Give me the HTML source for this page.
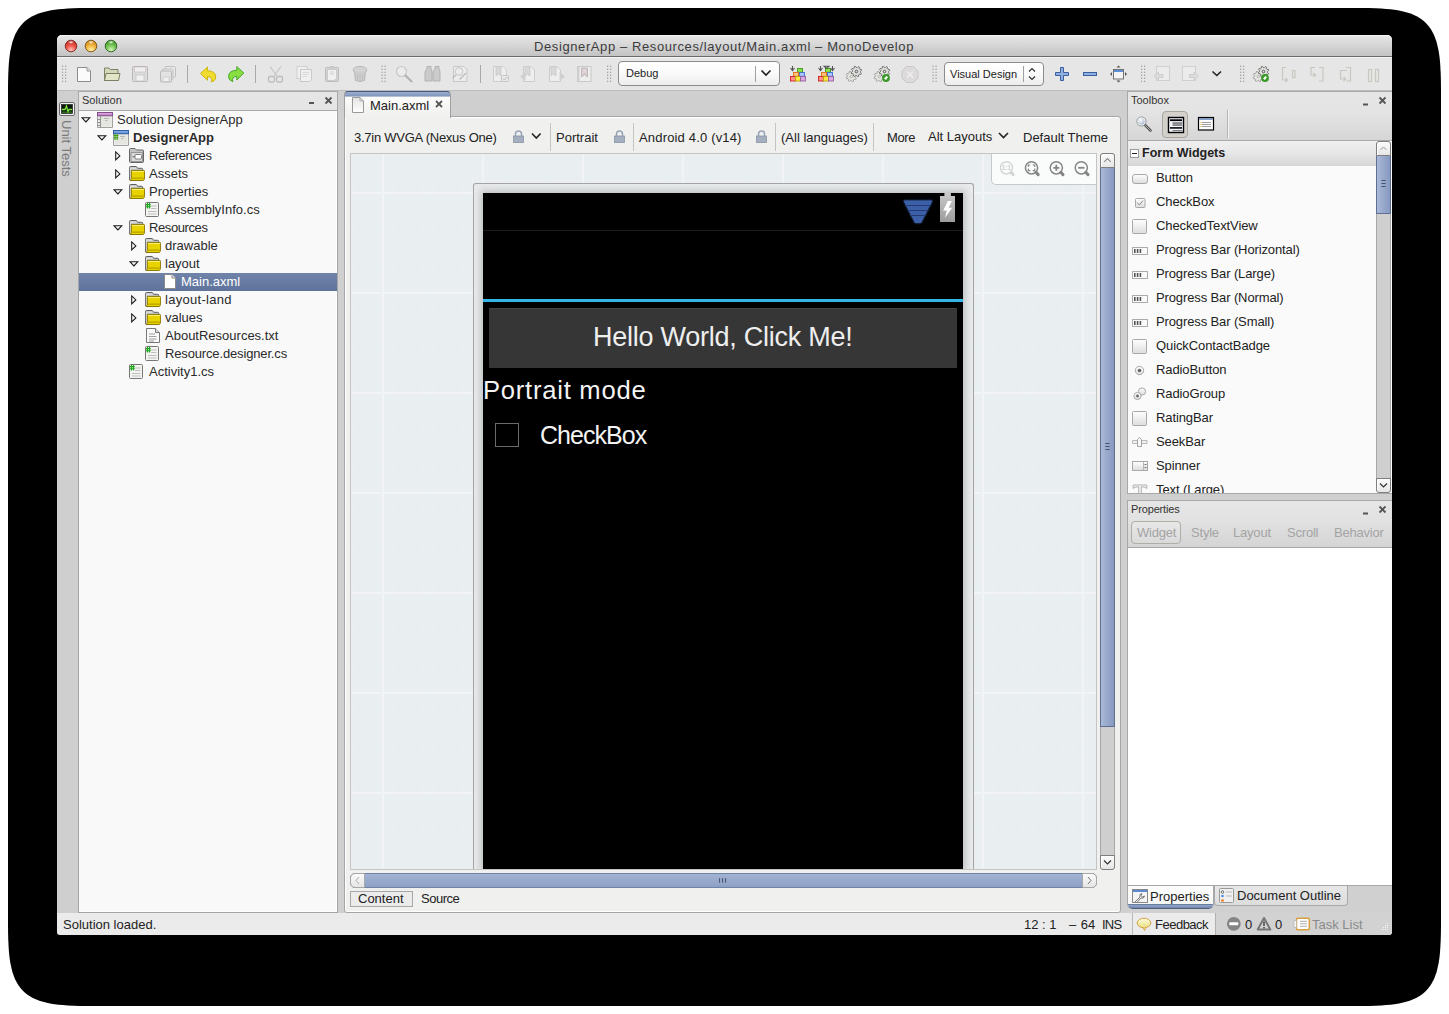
<!DOCTYPE html>
<html><head><meta charset="utf-8">
<style>
*{box-sizing:border-box;margin:0;padding:0}
html,body{width:1449px;height:1014px;overflow:hidden;background:#fff}
body{position:relative;font-family:"Liberation Sans",sans-serif;font-size:13px;color:#222}
.a{position:absolute}
svg{position:absolute;overflow:visible}
#shadow{left:8px;top:8px;width:1433px;height:998px;background:#000;border-radius:68px/58px}
#win{left:57px;top:35px;width:1335px;height:900px;background:#cfcfcf;border-radius:5px 5px 3px 3px;overflow:hidden}
#title{left:57px;top:35px;width:1335px;height:22px;background:linear-gradient(#ededed,#e4e4e4 10%,#c3c3c3);border-bottom:1px solid #6a6a6a;box-shadow:inset 0 1px 0 #f4f4f4;border-radius:5px 5px 0 0}
.tl{top:40px;width:12px;height:12px;border-radius:50%}
#toolbar{left:57px;top:57px;width:1335px;height:34px;background:#e6e6e6;border-top:1px solid #f5f5f5;border-bottom:1px solid #bdbdbd}
.t{position:absolute;white-space:nowrap;line-height:15px}
.r{position:absolute;white-space:nowrap;line-height:15px;font-size:13px;color:#2a2a2a}
</style></head><body>
<svg width="0" height="0" style="position:absolute">
<defs>
  <symbol id="exd" viewBox="0 0 10 6"><path d="M0.9 0.7 H8.9 L4.9 4.9 Z" fill="none" stroke="#1a1a1a" stroke-width="1.05" stroke-linejoin="miter"/></symbol>
  <symbol id="exr" viewBox="0 0 6 10"><path d="M0.7 0.9 V8.9 L4.9 4.9 Z" fill="none" stroke="#1a1a1a" stroke-width="1.05"/></symbol>
  <symbol id="folder" viewBox="0 0 16 15">
    <path d="M0.5 14 V1.5 Q0.5 0.5 1.5 0.5 H7.3 L8.8 2.3 H12.6 Q13.6 2.3 13.6 3.3 V5" fill="#c6c8cc" stroke="#505050" stroke-width="0.9"/>
    <path d="M1.3 14 V2.2 H7.3" fill="none" stroke="#e8e8e8" stroke-width="0.8"/>
    <path d="M2.3 4.4 H14.6 Q15.6 4.4 15.6 5.4 V12.8 L14.3 14.5 H0.8 Q2.3 13.8 2.3 12.5 Z" fill="#e8d200" stroke="#857400" stroke-width="0.95"/>
    <path d="M3 5.5 H14.8" stroke="#fff27a" stroke-width="0.9"/>
    <path d="M3 12.2 H14.8" stroke="#c4ae00" stroke-width="1.6"/>
  </symbol>
  <symbol id="reffolder" viewBox="0 0 16 15">
    <path d="M0.5 1.5 Q0.5 0.5 1.5 0.5 H6 L7.5 2 H13.5 Q14.5 2 14.5 3 V13.5 Q14.5 14.5 13.5 14.5 H1.5 Q0.5 14.5 0.5 13.5 Z" fill="#c4c4c4" stroke="#666" stroke-width="1"/>
    <path d="M2 4.5 H13.5 V13.5 H2 Z" fill="#dadada" stroke="#888" stroke-width="0.8"/>
    <rect x="6" y="6.5" width="6.5" height="4.5" rx="1" fill="#fff" stroke="#666" stroke-width="0.8"/>
    <path d="M3.5 8.7 H6" stroke="#666" stroke-width="1"/>
  </symbol>
  <symbol id="csfile" viewBox="0 0 14 15">
    <rect x="0.5" y="0.5" width="13" height="14" rx="1" fill="#f4f4f0" stroke="#777" stroke-width="1"/>
    <path d="M6 4 H11.5 M6 6.5 H11.5 M3 9.5 H11.5 M3 12 H11.5" stroke="#b8b8b8" stroke-width="0.9"/>
    <path d="M2.4 1 V6.5 M4.4 1 V6.5 M1 2.6 H5.8 M1 4.8 H5.8" stroke="#19a819" stroke-width="1.1"/>
  </symbol>
  <symbol id="doc" viewBox="0 0 12 15">
    <path d="M0.5 0.5 H8 L11.5 4 V14.5 H0.5 Z" fill="#fdfdfd" stroke="#8a8a8a" stroke-width="1"/>
    <path d="M8 0.5 V4 H11.5" fill="#e8e8e8" stroke="#8a8a8a" stroke-width="1"/>
  </symbol>
  <symbol id="txtdoc" viewBox="0 0 14 15">
    <path d="M0.5 0.5 H9.5 L13.5 4.5 V14.5 H0.5 Z" fill="#fafafa" stroke="#777" stroke-width="1"/>
    <path d="M9.5 0.5 V4.5 H13.5" fill="#ddd" stroke="#777" stroke-width="1"/>
    <path d="M3 6 H9 M3 8.5 H10.5 M3 11 H10.5 M3 13 H8" stroke="#777" stroke-width="0.7"/>
  </symbol>
  <symbol id="slnicon" viewBox="0 0 16 16">
    <rect x="0.5" y="0.5" width="15" height="15" rx="0.4" fill="#e6e6e0" stroke="#7a7a7a"/>
    <rect x="1" y="1" width="14" height="14" fill="none" stroke="#fafafa" stroke-width="0.6"/>
    <rect x="0.5" y="0.5" width="15" height="3.3" fill="#c07ac8" stroke="#7a4a80" stroke-width="0.9"/>
    <rect x="1" y="1.1" width="14" height="1.2" fill="#e0a8e4"/>
    <path d="M3.5 3.8 V15.5 M0.5 7.5 H3.5 M0.5 10.5 H3.5 M0.5 13.5 H3.5" stroke="#8a8a8a" stroke-width="0.9"/>
    <path d="M7 6.5 H12 M8 8.5 H10.5" stroke="#a8a8a8" stroke-width="0.8"/>
  </symbol>
  <symbol id="projicon" viewBox="0 0 16 16">
    <rect x="0.5" y="0.5" width="15" height="15" rx="0.4" fill="#e6e6e0" stroke="#7a7a7a"/>
    <rect x="1" y="1" width="14" height="14" fill="none" stroke="#fafafa" stroke-width="0.6"/>
    <rect x="0.5" y="0.5" width="15" height="3.3" fill="#4a7ac8" stroke="#2a5aa0" stroke-width="0.9"/>
    <rect x="1.2" y="1.2" width="13.6" height="1.4" fill="#8ab4ea"/>
    <path d="M2 4.2 V10 M4.2 4.2 V10 M0.8 5.5 H5.4 M0.8 7.8 H5.4" stroke="#3aa010" stroke-width="1.1"/>
    <path d="M7 6.5 H12 M8 8.5 H10.5" stroke="#a8a8a8" stroke-width="0.8"/>
  </symbol>
</defs>
</svg>
<svg style="left:0;top:0" width="1449" height="1014"><path d="M1333.0 8.0 L1359.4 8.0 L1368.7 8.1 L1375.6 8.3 L1381.2 8.6 L1386.1 8.9 L1390.4 9.3 L1394.3 9.8 L1397.8 10.3 L1401.1 11.0 L1404.1 11.7 L1407.0 12.4 L1409.6 13.3 L1412.1 14.2 L1414.4 15.2 L1416.6 16.3 L1418.7 17.5 L1420.7 18.8 L1422.5 20.1 L1424.3 21.6 L1425.9 23.1 L1427.4 24.7 L1428.9 26.5 L1430.2 28.3 L1431.5 30.3 L1432.7 32.4 L1433.8 34.6 L1434.8 36.9 L1435.7 39.4 L1436.6 42.0 L1437.3 44.9 L1438.0 47.9 L1438.7 51.2 L1439.2 54.7 L1439.7 58.6 L1440.1 62.9 L1440.4 67.8 L1440.7 73.4 L1440.9 80.3 L1441.0 89.6 L1441.0 116.0 L1441.0 898.0 L1441.0 924.4 L1440.9 933.7 L1440.7 940.6 L1440.4 946.2 L1440.1 951.1 L1439.7 955.4 L1439.2 959.3 L1438.7 962.8 L1438.0 966.1 L1437.3 969.1 L1436.6 972.0 L1435.7 974.6 L1434.8 977.1 L1433.8 979.4 L1432.7 981.6 L1431.5 983.7 L1430.2 985.7 L1428.9 987.5 L1427.4 989.3 L1425.9 990.9 L1424.3 992.4 L1422.5 993.9 L1420.7 995.2 L1418.7 996.5 L1416.6 997.7 L1414.4 998.8 L1412.1 999.8 L1409.6 1000.7 L1407.0 1001.6 L1404.1 1002.3 L1401.1 1003.0 L1397.8 1003.7 L1394.3 1004.2 L1390.4 1004.7 L1386.1 1005.1 L1381.2 1005.4 L1375.6 1005.7 L1368.7 1005.9 L1359.4 1006.0 L1333.0 1006.0 L116.0 1006.0 L89.6 1006.0 L80.3 1005.9 L73.4 1005.7 L67.8 1005.4 L62.9 1005.1 L58.6 1004.7 L54.7 1004.2 L51.2 1003.7 L47.9 1003.0 L44.9 1002.3 L42.0 1001.6 L39.4 1000.7 L36.9 999.8 L34.6 998.8 L32.4 997.7 L30.3 996.5 L28.3 995.2 L26.5 993.9 L24.7 992.4 L23.1 990.9 L21.6 989.3 L20.1 987.5 L18.8 985.7 L17.5 983.7 L16.3 981.6 L15.2 979.4 L14.2 977.1 L13.3 974.6 L12.4 972.0 L11.7 969.1 L11.0 966.1 L10.3 962.8 L9.8 959.3 L9.3 955.4 L8.9 951.1 L8.6 946.2 L8.3 940.6 L8.1 933.7 L8.0 924.4 L8.0 898.0 L8.0 116.0 L8.0 89.6 L8.1 80.3 L8.3 73.4 L8.6 67.8 L8.9 62.9 L9.3 58.6 L9.8 54.7 L10.3 51.2 L11.0 47.9 L11.7 44.9 L12.4 42.0 L13.3 39.4 L14.2 36.9 L15.2 34.6 L16.3 32.4 L17.5 30.3 L18.8 28.3 L20.1 26.5 L21.6 24.7 L23.1 23.1 L24.7 21.6 L26.5 20.1 L28.3 18.8 L30.3 17.5 L32.4 16.3 L34.6 15.2 L36.9 14.2 L39.4 13.3 L42.0 12.4 L44.9 11.7 L47.9 11.0 L51.2 10.3 L54.7 9.8 L58.6 9.3 L62.9 8.9 L67.8 8.6 L73.4 8.3 L80.3 8.1 L89.6 8.0 L116.0 8.0 Z" fill="#000"/></svg>
<div id="win" class="a"></div>
<div id="title" class="a"></div>
<svg style="left:0;top:0" width="1449" height="1014"><defs><radialGradient id="hl"><stop offset="0" stop-color="#fff" stop-opacity=".95"/><stop offset="1" stop-color="#fff" stop-opacity="0.1"/></radialGradient></defs><radialGradient id="tlr" cx="0.5" cy="0.85" r="0.75"><stop offset="0" stop-color="#ffc4bc"/><stop offset="0.55" stop-color="#f0564a"/><stop offset="1" stop-color="#c03228"/></radialGradient>
<circle cx="71" cy="46" r="5.8" fill="url(#tlr)" stroke="#7a2a22" stroke-width="0.9"/>
<ellipse cx="71" cy="42.3" rx="2.8" ry="1.5" fill="url(#hl)"/><radialGradient id="tlo" cx="0.5" cy="0.85" r="0.75"><stop offset="0" stop-color="#fff2a8"/><stop offset="0.55" stop-color="#f2b844"/><stop offset="1" stop-color="#d08820"/></radialGradient>
<circle cx="91" cy="46" r="5.8" fill="url(#tlo)" stroke="#7a5210" stroke-width="0.9"/>
<ellipse cx="91" cy="42.3" rx="2.8" ry="1.5" fill="url(#hl)"/><radialGradient id="tlg" cx="0.5" cy="0.85" r="0.75"><stop offset="0" stop-color="#d8f6bc"/><stop offset="0.55" stop-color="#78c858"/><stop offset="1" stop-color="#48982e"/></radialGradient>
<circle cx="111" cy="46" r="5.8" fill="url(#tlg)" stroke="#2e6420" stroke-width="0.9"/>
<ellipse cx="111" cy="42.3" rx="2.8" ry="1.5" fill="url(#hl)"/></svg>
<div class="t" style="left:534px;top:39px;font-size:13px;color:#3c3c3c;letter-spacing:0.6px">DesignerApp – Resources/layout/Main.axml – MonoDevelop</div>
<div id="toolbar" class="a"></div>
<!-- TOOLBAR ICONS -->
<svg style="left:0;top:0" width="1449" height="1014">
<g id="grips" fill="#9a9a9a"><rect x="62.0" y="65.7" width="1.2" height="1.2"/><rect x="62.0" y="68.7" width="1.2" height="1.2"/><rect x="62.0" y="71.7" width="1.2" height="1.2"/><rect x="62.0" y="74.7" width="1.2" height="1.2"/><rect x="62.0" y="77.7" width="1.2" height="1.2"/><rect x="62.0" y="80.7" width="1.2" height="1.2"/><rect x="65.0" y="65.7" width="1.2" height="1.2"/><rect x="65.0" y="68.7" width="1.2" height="1.2"/><rect x="65.0" y="71.7" width="1.2" height="1.2"/><rect x="65.0" y="74.7" width="1.2" height="1.2"/><rect x="65.0" y="77.7" width="1.2" height="1.2"/><rect x="65.0" y="80.7" width="1.2" height="1.2"/><rect x="381.5" y="65.7" width="1.2" height="1.2"/><rect x="381.5" y="68.7" width="1.2" height="1.2"/><rect x="381.5" y="71.7" width="1.2" height="1.2"/><rect x="381.5" y="74.7" width="1.2" height="1.2"/><rect x="381.5" y="77.7" width="1.2" height="1.2"/><rect x="381.5" y="80.7" width="1.2" height="1.2"/><rect x="384.5" y="65.7" width="1.2" height="1.2"/><rect x="384.5" y="68.7" width="1.2" height="1.2"/><rect x="384.5" y="71.7" width="1.2" height="1.2"/><rect x="384.5" y="74.7" width="1.2" height="1.2"/><rect x="384.5" y="77.7" width="1.2" height="1.2"/><rect x="384.5" y="80.7" width="1.2" height="1.2"/><rect x="607.0" y="65.7" width="1.2" height="1.2"/><rect x="607.0" y="68.7" width="1.2" height="1.2"/><rect x="607.0" y="71.7" width="1.2" height="1.2"/><rect x="607.0" y="74.7" width="1.2" height="1.2"/><rect x="607.0" y="77.7" width="1.2" height="1.2"/><rect x="607.0" y="80.7" width="1.2" height="1.2"/><rect x="610.0" y="65.7" width="1.2" height="1.2"/><rect x="610.0" y="68.7" width="1.2" height="1.2"/><rect x="610.0" y="71.7" width="1.2" height="1.2"/><rect x="610.0" y="74.7" width="1.2" height="1.2"/><rect x="610.0" y="77.7" width="1.2" height="1.2"/><rect x="610.0" y="80.7" width="1.2" height="1.2"/><rect x="932.5" y="65.7" width="1.2" height="1.2"/><rect x="932.5" y="68.7" width="1.2" height="1.2"/><rect x="932.5" y="71.7" width="1.2" height="1.2"/><rect x="932.5" y="74.7" width="1.2" height="1.2"/><rect x="932.5" y="77.7" width="1.2" height="1.2"/><rect x="932.5" y="80.7" width="1.2" height="1.2"/><rect x="935.5" y="65.7" width="1.2" height="1.2"/><rect x="935.5" y="68.7" width="1.2" height="1.2"/><rect x="935.5" y="71.7" width="1.2" height="1.2"/><rect x="935.5" y="74.7" width="1.2" height="1.2"/><rect x="935.5" y="77.7" width="1.2" height="1.2"/><rect x="935.5" y="80.7" width="1.2" height="1.2"/><rect x="1141.0" y="65.7" width="1.2" height="1.2"/><rect x="1141.0" y="68.7" width="1.2" height="1.2"/><rect x="1141.0" y="71.7" width="1.2" height="1.2"/><rect x="1141.0" y="74.7" width="1.2" height="1.2"/><rect x="1141.0" y="77.7" width="1.2" height="1.2"/><rect x="1141.0" y="80.7" width="1.2" height="1.2"/><rect x="1144.0" y="65.7" width="1.2" height="1.2"/><rect x="1144.0" y="68.7" width="1.2" height="1.2"/><rect x="1144.0" y="71.7" width="1.2" height="1.2"/><rect x="1144.0" y="74.7" width="1.2" height="1.2"/><rect x="1144.0" y="77.7" width="1.2" height="1.2"/><rect x="1144.0" y="80.7" width="1.2" height="1.2"/><rect x="1240.0" y="65.7" width="1.2" height="1.2"/><rect x="1240.0" y="68.7" width="1.2" height="1.2"/><rect x="1240.0" y="71.7" width="1.2" height="1.2"/><rect x="1240.0" y="74.7" width="1.2" height="1.2"/><rect x="1240.0" y="77.7" width="1.2" height="1.2"/><rect x="1240.0" y="80.7" width="1.2" height="1.2"/><rect x="1243.0" y="65.7" width="1.2" height="1.2"/><rect x="1243.0" y="68.7" width="1.2" height="1.2"/><rect x="1243.0" y="71.7" width="1.2" height="1.2"/><rect x="1243.0" y="74.7" width="1.2" height="1.2"/><rect x="1243.0" y="77.7" width="1.2" height="1.2"/><rect x="1243.0" y="80.7" width="1.2" height="1.2"/></g>
<!-- new doc -->
<path d="M77.5 67.5 H87 L90.5 71 V81.5 H77.5 Z" fill="#fbfbfb" stroke="#8c8c8c" stroke-width="1"/>
<path d="M87 67.5 V71 H90.5" fill="#e0e0e0" stroke="#8c8c8c" stroke-width="0.8"/>
<!-- open folder -->
<path d="M104.5 68 H109 L110.5 69.5 H118 V80.5 H104.5 Z" fill="#d4d8b8" stroke="#7c8064" stroke-width="1"/>
<path d="M106 73.5 H120 L118.5 80.5 H104.5 Z" fill="#e2e6c6" stroke="#7c8064" stroke-width="1"/>
<!-- save -->
<rect x="132.5" y="66.5" width="15" height="15" rx="1" fill="#dcdcdc" stroke="#b8b8b8"/>
<rect x="134.5" y="67" width="11" height="5" fill="#efefef" stroke="#c8b8b8" stroke-width="0.6"/>
<rect x="136" y="75" width="8" height="6" fill="#f0f0f0" stroke="#bdbdbd" stroke-width="0.6"/>
<!-- save all -->
<rect x="165" y="66.5" width="10.5" height="10.5" rx="1" fill="#e8e8e8" stroke="#c0c0c0"/>
<rect x="162.5" y="69" width="10.5" height="10.5" rx="1" fill="#e8e8e8" stroke="#c0c0c0"/>
<rect x="160.5" y="71" width="11" height="11" rx="1" fill="#e2e2e2" stroke="#b8b8b8"/>
<rect x="163" y="77" width="6" height="4.5" fill="#f0f0f0" stroke="#bdbdbd" stroke-width="0.6"/>
<!-- separators -->
<rect x="187" y="65" width="1" height="18" fill="#a8a8a8"/>
<rect x="255" y="65" width="1" height="18" fill="#a8a8a8"/>
<rect x="480" y="65" width="1" height="18" fill="#a8a8a8"/>
<!-- undo -->
<path d="M200.5 73.5 L207.5 67 V70.8 Q215.5 70.8 215.8 77 Q216 80.5 211.5 82 Q213 77 207.5 76.5 V80.3 Z" fill="#f0dc30" stroke="#c8b000" stroke-width="0.9" stroke-linejoin="round"/>
<!-- redo -->
<path d="M243.8 73 L236.8 66.5 V70.3 Q228.8 70.3 228.5 76.5 Q228.3 80 232.8 81.8 Q231.3 76.8 236.8 76.3 V80 Z" fill="#88dd40" stroke="#3ca020" stroke-width="0.9" stroke-linejoin="round"/>
<!-- cut -->
<path d="M270 66.5 L277 76 M281 66.5 L274 76" stroke="#c4c4c4" stroke-width="1.2"/>
<rect x="268.5" y="76.5" width="6" height="5.5" rx="1.5" fill="none" stroke="#bdbdbd" stroke-width="1.3"/>
<rect x="276.5" y="76.5" width="6" height="5.5" rx="1.5" fill="none" stroke="#bdbdbd" stroke-width="1.3"/>
<!-- copy -->
<rect x="297" y="66.5" width="10" height="12" fill="#efefef" stroke="#d0d0d0"/>
<path d="M300.5 69.5 H311.5 V79.5 L309.5 81.5 H300.5 Z" fill="#f0f0f0" stroke="#c8c8c8"/>
<path d="M302.5 72.5 H309 M302.5 74.5 H309 M302.5 76.5 H307" stroke="#d0d0d0" stroke-width="0.7"/>
<!-- paste -->
<rect x="325.5" y="67.5" width="13" height="14" rx="1" fill="#d4d4d4" stroke="#bcbcbc"/>
<path d="M327.5 69.5 H336.5 V78.5 L334 80.5 H327.5 Z" fill="#f0f0f0" stroke="#c4c4c4" stroke-width="0.8"/>
<rect x="329.5" y="66" width="5" height="2.5" rx="1" fill="#c8c8c8"/>
<path d="M330 72 H334 M330 74 H334" stroke="#c8c8c8" stroke-width="0.8"/>
<!-- trash -->
<ellipse cx="360" cy="70" rx="6.8" ry="3.6" fill="#d2d2d2" stroke="#b8b8b8"/>
<path d="M354.5 71.5 L355.5 80.5 Q360 82.5 364.5 80.5 L365.5 71.5" fill="#cdcdcd" stroke="#b8b8b8"/>
<path d="M357.5 74 V80 M360 74 V81 M362.5 74 V80" stroke="#bdbdbd" stroke-width="0.8"/>
<!-- find -->
<circle cx="401.5" cy="71.5" r="5" fill="#ececec" stroke="#c8c8c8" stroke-width="1.2"/>
<path d="M405.5 75.5 L411.5 81.5" stroke="#b4b4b4" stroke-width="2.2" stroke-linecap="round"/>
<!-- binoculars -->
<path d="M425 73 Q425 70 427 69 V66.5 H431 V69 Q432 70.5 432 73 V81 H425 Z" fill="#cbcbcb" stroke="#b2b2b2"/>
<path d="M433 73 Q433 70 435 69 V66.5 H439 V69 Q440 70.5 440 73 V81 H433 Z" fill="#cbcbcb" stroke="#b2b2b2"/>
<!-- find replace -->
<path d="M453.5 66.5 H464 L467 69.5 V81.5 H453.5 Z" fill="#ececec" stroke="#c8c8c8"/>
<circle cx="459" cy="71.5" r="3.8" fill="none" stroke="#c4c4c4" stroke-width="1"/>
<path d="M456 75 L452.5 78 M466 73 L459.5 79.5" stroke="#bcbcbc" stroke-width="1.3"/>
<!-- bookmark icons -->
<path d="M493.5 66.5 H503 L506.5 70 V81.5 H493.5 Z" fill="#eeeeee" stroke="#cccccc"/>
<path d="M496 67 V76 L498.5 74 L501 76 V67" fill="#d8d8d8" stroke="#c4c4c4" stroke-width="0.7"/>
<rect x="501.5" y="75.5" width="7" height="6" rx="1" fill="#e8e8e8" stroke="#c4c4c4"/>
<path d="M503 78.5 L504.5 80 L507 77" fill="none" stroke="#b8b8b8" stroke-width="0.9"/>

<path d="M523.5 66.5 H531 L534.5 70 V81.5 H523.5 Z" fill="#eeeeee" stroke="#cccccc"/>
<path d="M525 67 V76 L527.5 74 L530 76 V67" fill="#d8d8d8" stroke="#c4c4c4" stroke-width="0.7"/>
<path d="M520 76.5 L525.5 72 V81 Z" fill="#cfcfcf"/>

<path d="M549.5 66.5 H557 L560.5 70 V81.5 H549.5 Z" fill="#eeeeee" stroke="#cccccc"/>
<path d="M551 67 V76 L553.5 74 L556 76 V67" fill="#d8d8d8" stroke="#c4c4c4" stroke-width="0.7"/>
<path d="M565 76.5 L559.5 72 V81 Z" fill="#cfcfcf"/>

<rect x="577.5" y="66.5" width="13.5" height="15" fill="#eeeeee" stroke="#c8c8c8"/>
<rect x="577.5" y="66.5" width="2" height="15" fill="#d0d0d0"/>
<path d="M581.5 68 V77 L584.5 74.5 L587.5 77 V68 Z" fill="#d6cccc" stroke="#b8a8a8" stroke-width="0.7"/>
<path d="M582.5 69 L586.5 73 M586.5 69 L582.5 73" stroke="#f0f0f0" stroke-width="0.6"/>

<!-- Debug combo -->
<!-- build -->
<g>
<rect x="797.5" y="68.5" width="5" height="3.8" fill="#8ee048" stroke="#3a9a20" stroke-width="0.9"/>
<rect x="793.5" y="72.5" width="5" height="3.8" fill="#ffc080" stroke="#e07010" stroke-width="0.9"/>
<rect x="799.5" y="72.5" width="5" height="3.8" fill="#a8c8ff" stroke="#3a70d0" stroke-width="0.9"/>
<rect x="790.5" y="76.5" width="5" height="4.5" fill="#ff9090" stroke="#d02020" stroke-width="0.9"/>
<rect x="795.5" y="76.5" width="5" height="4.5" fill="#ffe840" stroke="#c0a000" stroke-width="0.9"/>
<rect x="800.5" y="76.5" width="5" height="4.5" fill="#e0a8e0" stroke="#9060a0" stroke-width="0.9"/>
<path d="M792.5 66 V70 M790.5 68 L792.5 70.5 L794.5 68" fill="none" stroke="#555" stroke-width="1.1"/>
</g>
<g>
<rect x="825.5" y="68.5" width="5" height="3.8" fill="#8ee048" stroke="#3a9a20" stroke-width="0.9"/>
<rect x="821.5" y="72.5" width="5" height="3.8" fill="#ffc080" stroke="#e07010" stroke-width="0.9"/>
<rect x="827.5" y="72.5" width="5" height="3.8" fill="#a8c8ff" stroke="#3a70d0" stroke-width="0.9"/>
<rect x="818.5" y="76.5" width="5" height="4.5" fill="#ff9090" stroke="#d02020" stroke-width="0.9"/>
<rect x="823.5" y="76.5" width="5" height="4.5" fill="#ffe840" stroke="#c0a000" stroke-width="0.9"/>
<rect x="828.5" y="76.5" width="5" height="4.5" fill="#e0a8e0" stroke="#9060a0" stroke-width="0.9"/>
<path d="M820.5 66 V70 M818.5 68 L820.5 70.5 L822.5 68 M832.5 66 V70 M830.5 68 L832.5 70.5 L834.5 68 M824 66.2 H829 L826.5 68.5 Z" fill="none" stroke="#555" stroke-width="1.1"/>
</g>
<!-- gears -->
<defs><path id="gearp" d="M3.92 0.79 L4.97 1.85 L4.40 2.96 L2.93 2.73 L2.21 3.33 L2.20 4.82 L1.01 5.20 L0.14 4.00 L-0.79 3.92 L-1.85 4.97 L-2.96 4.40 L-2.73 2.93 L-3.33 2.21 L-4.82 2.20 L-5.20 1.01 L-4.00 0.14 L-3.92 -0.79 L-4.97 -1.85 L-4.40 -2.96 L-2.93 -2.73 L-2.21 -3.33 L-2.20 -4.82 L-1.01 -5.20 L-0.14 -4.00 L0.79 -3.92 L1.85 -4.97 L2.96 -4.40 L2.73 -2.93 L3.33 -2.21 L4.82 -2.20 L5.20 -1.01 L4.00 -0.14 Z"/></defs>
<use href="#gearp" x="851.3" y="76.5" fill="#e4e4e0" stroke="#9c9c9c" stroke-width="0.9"/>
<use href="#gearp" x="856.4" y="71.5" fill="#e0e0dc" stroke="#6e6e6e" stroke-width="1"/>
<circle cx="856.4" cy="71.5" r="1.3" fill="none" stroke="#555" stroke-width="1"/>
<circle cx="851.3" cy="76.5" r="1.2" fill="none" stroke="#aaa" stroke-width="0.8"/>
<use href="#gearp" x="879.3" y="76.5" fill="#e4e4e0" stroke="#9c9c9c" stroke-width="0.9"/>
<use href="#gearp" x="884.5" y="71.5" fill="#e0e0dc" stroke="#6e6e6e" stroke-width="1"/>
<circle cx="884.5" cy="71.5" r="1.3" fill="none" stroke="#555" stroke-width="1"/>
<circle cx="879.3" cy="76.5" r="1.2" fill="none" stroke="#aaa" stroke-width="0.8"/>
<circle cx="886" cy="78" r="3.9" fill="#3a9a28"/>
<path d="M884 78.5 L886.5 76 L888 77 L886 80 Z" fill="#fff"/>
<!-- stop -->
<path d="M906.5 66.5 H913.5 L918 71 V78 L913.5 82.5 H906.5 L902 78 V71 Z" fill="#dcdada" stroke="#c8c6c6"/>
<path d="M907 71.5 L913 77.5 M913 71.5 L907 77.5" stroke="#f0f0f0" stroke-width="1.3"/>
<!-- plus minus -->
<path d="M1060.5 67.5 H1063.5 V72.5 H1068.5 V75.5 H1063.5 V80.5 H1060.5 V75.5 H1055.5 V72.5 H1060.5 Z" fill="#8eb0e0" stroke="#3a5ea0" stroke-width="1"/>
<rect x="1083.5" y="72.5" width="13" height="3" fill="#8eb0e0" stroke="#3a5ea0" stroke-width="1"/>
<!-- fit -->
<rect x="1113.5" y="69.5" width="10" height="9.5" fill="#f4f4f4" stroke="#666" stroke-width="0.9"/>
<rect x="1114" y="70" width="9" height="2" fill="#5b8fd8"/>
<path d="M1118.5 65.5 L1116.5 67.5 H1120.5 Z M1118.5 82.5 L1116.5 80.5 H1120.5 Z M1110 74 L1112 72 V76 Z M1127 74 L1125 72 V76 Z" fill="#555"/>
<!-- disabled doc arrows -->
<rect x="1156.5" y="66.5" width="13" height="14" fill="#ececec" stroke="#cfcfcf"/>
<path d="M1154 76 L1158.5 72 V74.5 H1163 V77.5 H1158.5 V80 Z" fill="#dcdcdc" stroke="#c8c8c8" stroke-width="0.8"/>
<rect x="1182.5" y="66.5" width="13" height="14" fill="#ececec" stroke="#cfcfcf"/>
<path d="M1198.5 76 L1194 72 V74.5 H1189.5 V77.5 H1194 V80 Z" fill="#dcdcdc" stroke="#c8c8c8" stroke-width="0.8"/>
<path d="M1212.5 71.5 L1216.8 75.5 L1221 71.5" fill="none" stroke="#222" stroke-width="1.6"/>
<!-- gears green right -->
<use href="#gearp" x="1258.3" y="76.5" fill="#e4e4e0" stroke="#9c9c9c" stroke-width="0.9"/>
<use href="#gearp" x="1263.5" y="71.5" fill="#e0e0dc" stroke="#6e6e6e" stroke-width="1"/>
<circle cx="1263.5" cy="71.5" r="1.3" fill="none" stroke="#555" stroke-width="1"/>
<circle cx="1258.3" cy="76.5" r="1.2" fill="none" stroke="#aaa" stroke-width="0.8"/>
<circle cx="1265" cy="78" r="3.9" fill="#3a9a28"/>
<path d="M1263 78.5 L1265.5 76 L1267 77 L1265 80 Z" fill="#fff"/>
<!-- step icons -->
<g fill="none" stroke="#c8c8c0" stroke-width="1.2">
<path d="M1286 67.5 H1282.5 V80 M1282.5 80 H1287 M1285.5 78 L1287.5 80 L1285.5 82"/>
<rect x="1292.5" y="70.5" width="2.5" height="7"/>
<path d="M1315 67.5 H1311 V75 H1315 M1313.5 73 L1315.5 75 L1313.5 77 M1319 67.5 H1323 V81 H1319"/>
<path d="M1346 67.5 H1350.5 V81 H1346 M1347 70.5 H1340.5 V79 H1345 M1343.5 77 L1345.5 79 L1343.5 81"/>
<rect x="1368.5" y="69.5" width="3" height="12"/>
<rect x="1375.5" y="69.5" width="3" height="12"/>
</g>
</svg>
<div class="a" style="left:618px;top:61px;width:162px;height:25px;border:1px solid #8c8c8c;border-radius:4px;background:linear-gradient(#ffffff,#fafafa 50%,#ececec)"></div>
<div class="a" style="left:755px;top:66px;width:1px;height:16px;background:#a0a0a0"></div>
<div class="t" style="left:626px;top:66px;font-size:11px;color:#222">Debug</div>
<svg style="left:760px;top:69px" width="12" height="8"><path d="M1.5 1.5 L6 6 L10.5 1.5" fill="none" stroke="#222" stroke-width="1.7"/></svg>
<div class="a" style="left:944px;top:62px;width:100px;height:24px;border:1px solid #8c8c8c;border-radius:4px;background:linear-gradient(#ffffff,#fafafa 50%,#ececec)"></div>
<div class="a" style="left:1023px;top:66px;width:1px;height:16px;background:#a0a0a0"></div>
<div class="t" style="left:950px;top:67px;font-size:11px;color:#222">Visual Design</div>
<svg style="left:1027px;top:66px" width="10" height="16"><path d="M2 5.5 L5 2.5 L8 5.5 M2 10.5 L5 13.5 L8 10.5" fill="none" stroke="#333" stroke-width="1.2"/></svg>


<!-- LEFT STRIP -->
<div class="a" style="left:57px;top:91px;width:21px;height:822px;background:#cfcfcf"></div>
<!-- SOLUTION PANEL -->
<div class="a" style="left:78px;top:91px;width:260px;height:822px;background:#f9f9f9;border:1px solid #a4a4a4;box-shadow:inset -1px -1px 0 #fff"></div>
<div class="a" style="left:78px;top:91px;width:260px;height:20px;background:#e5e5e5;border:1px solid #a8a8a8"></div>
<div class="t" style="left:82px;top:93px;font-size:11px;color:#333">Solution</div>
<svg style="left:0;top:0" width="1449" height="1014"><path d="M309 103 H314" stroke="#555" stroke-width="2"/><path d="M325.5 97.5 L331.5 103.5 M331.5 97.5 L325.5 103.5" stroke="#555" stroke-width="1.8"/></svg>

<div id="tree">
<svg style="left:81px;top:117px" width="10" height="6"><use href="#exd"/></svg>
<svg style="left:97px;top:112px" width="16" height="16"><use href="#slnicon"/></svg>
<div class="r" style="left:117px;top:112px">Solution DesignerApp</div>

<svg style="left:97px;top:135px" width="10" height="6"><use href="#exd"/></svg>
<svg style="left:113px;top:130px" width="16" height="16"><use href="#projicon"/></svg>
<div class="r" style="left:133px;top:130px;font-weight:bold">DesignerApp</div>

<svg style="left:115px;top:151px" width="6" height="10"><use href="#exr"/></svg>
<svg style="left:129px;top:148px" width="16" height="15"><use href="#reffolder"/></svg>
<div class="r" style="left:149px;top:148px;letter-spacing:-0.4px">References</div>

<svg style="left:115px;top:169px" width="6" height="10"><use href="#exr"/></svg>
<svg style="left:129px;top:166px" width="16" height="15"><use href="#folder"/></svg>
<div class="r" style="left:149px;top:166px">Assets</div>

<svg style="left:113px;top:189px" width="10" height="6"><use href="#exd"/></svg>
<svg style="left:129px;top:184px" width="16" height="15"><use href="#folder"/></svg>
<div class="r" style="left:149px;top:184px">Properties</div>

<svg style="left:145px;top:202px" width="14" height="15"><use href="#csfile"/></svg>
<div class="r" style="left:165px;top:202px">AssemblyInfo.cs</div>

<svg style="left:113px;top:225px" width="10" height="6"><use href="#exd"/></svg>
<svg style="left:129px;top:220px" width="16" height="15"><use href="#folder"/></svg>
<div class="r" style="left:149px;top:220px;letter-spacing:-0.4px">Resources</div>

<svg style="left:131px;top:241px" width="6" height="10"><use href="#exr"/></svg>
<svg style="left:145px;top:238px" width="16" height="15"><use href="#folder"/></svg>
<div class="r" style="left:165px;top:238px">drawable</div>

<svg style="left:129px;top:261px" width="10" height="6"><use href="#exd"/></svg>
<svg style="left:145px;top:256px" width="16" height="15"><use href="#folder"/></svg>
<div class="r" style="left:165px;top:256px">layout</div>

<div class="a" style="left:79px;top:273px;width:258px;height:18px;background:linear-gradient(#7083a9,#5f739b)"></div>
<svg style="left:164px;top:274px" width="12" height="15"><use href="#doc"/></svg>
<div class="r" style="left:181px;top:274px;color:#fff">Main.axml</div>

<svg style="left:131px;top:295px" width="6" height="10"><use href="#exr"/></svg>
<svg style="left:145px;top:292px" width="16" height="15"><use href="#folder"/></svg>
<div class="r" style="left:165px;top:292px;letter-spacing:0.3px">layout-land</div>

<svg style="left:131px;top:313px" width="6" height="10"><use href="#exr"/></svg>
<svg style="left:145px;top:310px" width="16" height="15"><use href="#folder"/></svg>
<div class="r" style="left:165px;top:310px">values</div>

<svg style="left:146px;top:328px" width="14" height="15"><use href="#txtdoc"/></svg>
<div class="r" style="left:165px;top:328px">AboutResources.txt</div>

<svg style="left:145px;top:346px" width="14" height="15"><use href="#csfile"/></svg>
<div class="r" style="left:165px;top:346px;letter-spacing:-0.15px">Resource.designer.cs</div>

<svg style="left:129px;top:364px" width="14" height="15"><use href="#csfile"/></svg>
<div class="r" style="left:149px;top:364px">Activity1.cs</div>
</div>

<!-- EDITOR -->
<div class="a" style="left:338px;top:91px;width:789px;height:822px;background:#cfcfcf"></div>
<div class="a" style="left:344px;top:116px;width:777px;height:797px;background:#f0f0ee;border:1px solid #a6a6a6;border-radius:0 3px 3px 3px;box-shadow:inset 1px 1px 0 #fff,inset 0 -1px 0 #fff"></div>
<!-- tab -->
<div class="a" style="left:344px;top:91px;width:107px;height:27px;border:1px solid #a0a0a0;border-bottom:none;border-top:1px solid #4a5878;border-radius:4px 4px 0 0;background:linear-gradient(#9cb0d2 0,#8095bb 4px,#6c7fa6 4px,#fdfdfd 5px,#f6f6f4 14px,#f0f0ee 100%)"></div>
<svg style="left:352px;top:97px" width="12" height="16"><path d="M0.5 0.5 H8 L11.5 4 V15.5 H0.5 Z" fill="url(#docg)" stroke="#9a9a9a"/><path d="M8 0.5 V4 H11.5" fill="none" stroke="#a4a4a4" stroke-width="0.8"/>
<defs><linearGradient id="docg" x1="0" y1="0" x2="0" y2="1"><stop offset="0" stop-color="#e4e4e4"/><stop offset="1" stop-color="#ffffff"/></linearGradient></defs></svg>
<div class="t" style="left:370px;top:98px;font-size:13px;color:#222">Main.axml</div>
<svg style="left:435px;top:100px" width="8" height="8"><path d="M1 1 L7 7 M7 1 L1 7" stroke="#555" stroke-width="1.8"/></svg>

<!-- header items -->
<div class="t" style="left:354px;top:130px;font-size:13px;color:#222;letter-spacing:-0.25px">3.7in WVGA (Nexus One)</div>
<div class="t" style="left:556px;top:130px;font-size:13px;color:#222">Portrait</div>
<div class="t" style="left:639px;top:130px;font-size:13px;color:#222;letter-spacing:0.17px">Android 4.0 (v14)</div>
<div class="t" style="left:781px;top:130px;font-size:13px;color:#222">(All languages)</div>
<div class="t" style="left:887px;top:130px;font-size:13px;color:#222;letter-spacing:-0.4px">More</div>
<div class="t" style="left:928px;top:129px;font-size:13px;color:#222">Alt Layouts</div>
<div class="t" style="left:1023px;top:130px;font-size:13px;color:#222">Default Theme</div>
<div class="a" style="left:550px;top:123px;width:1px;height:28px;background:#c4c4c2"></div>
<div class="a" style="left:633px;top:123px;width:1px;height:28px;background:#c4c4c2"></div>
<div class="a" style="left:775px;top:123px;width:1px;height:28px;background:#c4c4c2"></div>
<div class="a" style="left:873px;top:123px;width:1px;height:28px;background:#c4c4c2"></div>
<svg style="left:0;top:0" width="1449" height="1014">
<defs><symbol id="lock" viewBox="0 0 11 13"><path d="M2.5 6 V4 Q2.5 1 5.5 1 Q8.5 1 8.5 4 V6" fill="none" stroke="#98a4b4" stroke-width="1.5"/><rect x="0.5" y="6" width="10" height="6.5" fill="#a4b0c0" stroke="#8894a6" stroke-width="0.8"/></symbol></defs>
<use href="#lock" x="513" y="130" width="11" height="13"/>
<use href="#lock" x="614" y="130" width="11" height="13"/>
<use href="#lock" x="756" y="130" width="11" height="13"/>
<path d="M532 133.5 L536.3 138 L540.6 133.5" fill="none" stroke="#222" stroke-width="1.6"/>
<path d="M999 133 L1003.5 137.5 L1008 133" fill="none" stroke="#222" stroke-width="1.6"/>
</svg>

<!-- canvas -->
<div class="a" style="left:350px;top:153px;width:747px;height:717px;border:1px solid #c4c4c4;background-color:#e9eef1;
background-image:linear-gradient(90deg,#f1f3f5 2px,transparent 2px),linear-gradient(#f1f3f5 2px,transparent 2px),linear-gradient(90deg,#ebeff2 2px,transparent 2px),linear-gradient(#ebeff2 2px,transparent 2px);
background-size:100px 100px,100px 100px,10px 10px,10px 10px;background-position:31px 38px,31px 38px,1px 8px,1px 8px;overflow:hidden">
</div>
<!-- phone frame -->
<div class="a" style="left:473px;top:183px;width:501px;height:686px;border:1px solid #a4a4a4;border-bottom:none;border-radius:3px 3px 0 0;background:#e8eaeb"></div>
<div class="a" style="left:483px;top:193px;width:480px;height:676px;background:#000;box-shadow:0 0 7px 2px rgba(60,64,68,.28);clip-path:inset(-12px -12px 0 -12px)"></div>
<div class="a" style="left:483px;top:230px;width:480px;height:1px;background:#1c1c1c"></div>
<div class="a" style="left:483px;top:299px;width:480px;height:3px;background:#33b5e5"></div>
<div class="a" style="left:489px;top:308px;width:468px;height:60px;background:#363636;border-top:1px solid #444;border-radius:1px"></div>
<div class="t" style="left:593px;top:322px;font-size:27px;line-height:30px;color:#eeeeee;letter-spacing:-0.25px">Hello World, Click Me!</div>
<div class="t" style="left:483px;top:375px;font-size:25.6px;line-height:30px;color:#f4f4f4;letter-spacing:0.75px">Portrait mode</div>
<div class="a" style="left:495px;top:423px;width:24px;height:24px;border:1px solid #6a6a6a"></div>
<div class="t" style="left:540px;top:421px;font-size:25px;line-height:28px;color:#f4f4f4;letter-spacing:-0.95px">CheckBox</div>
<svg style="left:0;top:0" width="1449" height="1014">
<defs><linearGradient id="batg" x1="0" y1="0" x2="0" y2="1"><stop offset="0" stop-color="#c4c4c4"/><stop offset="1" stop-color="#9c9c9c"/></linearGradient>
<filter id="glow" x="-30%" y="-30%" width="160%" height="160%"><feGaussianBlur stdDeviation="1.3" result="b"/><feMerge><feMergeNode in="b"/><feMergeNode in="SourceGraphic"/></feMerge></filter></defs>
<path d="M903.5 200.5 H932.5 L921 223 H915 Z" fill="#3a5ea8" filter="url(#glow)"/>
<path d="M905 205.5 H931 M907.5 210.5 H928.5 M910 215.5 H926" stroke="#233a70" stroke-width="1"/>
<rect x="944.4" y="193" width="6.5" height="3" fill="#c8c8c8"/>
<rect x="940" y="196" width="15" height="26" fill="url(#batg)"/>
<path d="M947.8 201 H952 L948.6 207.8 H952.2 L945 217.8 L946.8 210.5 H943.2 Z" fill="#fff"/>
</svg>

<!-- zoom box -->
<div class="a" style="left:991px;top:154px;width:105px;height:31px;background:#fafbfb;border-left:1px solid #c8c8c8;border-bottom:1px solid #c8c8c8;border-radius:0 0 0 5px"></div>
<svg style="left:0;top:0" width="1449" height="1014">
<g fill="none">
<circle cx="1006.5" cy="167.8" r="6.1" stroke="#d6d6d6" stroke-width="1.5"/><path d="M1011 172.3 L1013.2 174.6" stroke="#d4d4d4" stroke-width="3" stroke-linecap="round"/>
<text x="1006.5" y="170.3" font-size="6.5" font-weight="bold" text-anchor="middle" fill="#cfcfcf" font-family="Liberation Sans">1:1</text>
<circle cx="1031.5" cy="167.8" r="6.1" stroke="#858585" stroke-width="1.5"/><path d="M1036 172.3 L1038.2 174.6" stroke="#858585" stroke-width="3" stroke-linecap="round"/>
<path d="M1028.3 167 V165 H1030.3 M1032.7 165 H1034.7 V167 M1034.7 168.6 V170.6 H1032.7 M1030.3 170.6 H1028.3 V168.6" stroke="#858585" stroke-width="1.1"/>
<circle cx="1056.3" cy="167.8" r="6.1" stroke="#858585" stroke-width="1.5"/><path d="M1060.8 172.3 L1063 174.6" stroke="#858585" stroke-width="3" stroke-linecap="round"/>
<path d="M1053.3 167.8 H1059.3 M1056.3 164.8 V170.8" stroke="#858585" stroke-width="1.8"/>
<circle cx="1081.3" cy="167.8" r="6.1" stroke="#858585" stroke-width="1.5"/><path d="M1085.8 172.3 L1088 174.6" stroke="#858585" stroke-width="3" stroke-linecap="round"/>
<path d="M1078.1 167.8 H1084.5" stroke="#858585" stroke-width="1.8"/>
</g>
</svg>

<!-- v scrollbar -->
<div class="a" style="left:1100px;top:153px;width:15px;height:717px;background:#cfcfcf;border:1px solid #a8a8a8;border-radius:4px"></div>
<div class="a" style="left:1100px;top:153px;width:15px;height:15px;background:linear-gradient(#fbfbfb,#e6e6e6);border:1px solid #7e7e7e;border-radius:3px 3px 0 0;box-shadow:inset 1px 1px 0 #fff"></div>
<div class="a" style="left:1100px;top:168px;width:15px;height:559px;border-top:none!important;background:linear-gradient(90deg,#aab9d9,#9cadcf 35%,#8799c0);border:1px solid #5f6f90"></div>
<div class="a" style="left:1100px;top:855px;width:15px;height:15px;background:linear-gradient(#fbfbfb,#e6e6e6);border:1px solid #7e7e7e;border-radius:0 0 3px 3px;box-shadow:inset 1px 1px 0 #fff"></div>
<svg style="left:0;top:0" width="1449" height="1014">
<path d="M1104.2 161.8 L1107.5 158.6 L1110.8 161.8" fill="none" stroke="#8a8a8a" stroke-width="1.1"/>
<path d="M1104 860.5 L1107.5 864 L1111 860.5" fill="none" stroke="#333" stroke-width="1.2"/>
<g fill="#4a5670"><rect x="1105.2" y="443" width="4.6" height="1.1" rx=".5"/><rect x="1105.2" y="446" width="4.6" height="1.1" rx=".5"/><rect x="1105.2" y="449" width="4.6" height="1.1" rx=".5"/></g>
</svg>
<!-- h scrollbar -->
<div class="a" style="left:350px;top:873px;width:747px;height:15px;background:linear-gradient(#a2b3d4,#8ea0c4);border:1px solid #6f82a8;border-radius:5px"></div>
<div class="a" style="left:350px;top:873px;width:15px;height:15px;background:linear-gradient(#fafafa,#e6e6e6);border:1px solid #a8a8a8;border-radius:5px 0 0 5px"></div>
<div class="a" style="left:1082px;top:873px;width:15px;height:15px;background:linear-gradient(#fafafa,#e6e6e6);border:1px solid #a8a8a8;border-radius:0 5px 5px 0"></div>
<svg style="left:0;top:0" width="1449" height="1014">
<path d="M359 877 L356 880.5 L359 884" fill="none" stroke="#aaa" stroke-width="1"/>
<path d="M1088 877 L1091 880.5 L1088 884" fill="none" stroke="#777" stroke-width="1"/>
<g fill="#4a5670"><rect x="719" y="878" width="1.1" height="4.8" rx=".5"/><rect x="722" y="878" width="1.1" height="4.8" rx=".5"/><rect x="725" y="878" width="1.1" height="4.8" rx=".5"/></g>
</svg>
<!-- bottom buttons -->
<div class="a" style="left:350px;top:891px;width:63px;height:16px;border:1px solid #a8a8a8;background:#ececec"></div>
<div class="t" style="left:358px;top:891px;font-size:13px;color:#222">Content</div>
<div class="t" style="left:421px;top:891px;font-size:13px;color:#222;letter-spacing:-0.5px">Source</div>

<!-- RIGHT PANEL -->
<div class="a" style="left:1127px;top:91px;width:265px;height:403px;background:#fafafa;border:1px solid #a8a8a8;border-right:none"></div>
<div class="a" style="left:1127px;top:91px;width:265px;height:50px;background:linear-gradient(#e6e6e6,#e4e4e4 40%,#d6d6d6);border:1px solid #a8a8a8;border-right:none"></div>
<div class="t" style="left:1131px;top:93px;font-size:11px;color:#333">Toolbox</div>
<div class="a" style="left:1162px;top:111px;width:26px;height:27px;background:#d4d1cd;border:1px solid #a8a49e;border-radius:4px"></div>
<div class="a" style="left:1227px;top:110px;width:1px;height:28px;background:#b4b4b4;box-shadow:1px 0 0 #f4f4f4"></div>
<svg style="left:0;top:0" width="1449" height="1014">
<defs>
<radialGradient id="lensg" cx="0.4" cy="0.35" r="0.7"><stop offset="0" stop-color="#ffffff"/><stop offset="1" stop-color="#8aa0bc"/></radialGradient>
<linearGradient id="btng" x1="0" y1="0" x2="0" y2="1"><stop offset="0" stop-color="#ffffff"/><stop offset="1" stop-color="#dcdcdc"/></linearGradient>
</defs>
<circle cx="1141.5" cy="121.5" r="4.6" fill="url(#lensg)" stroke="#8a8a8a" stroke-width="0.8"/><circle cx="1141.5" cy="121.5" r="3.7" fill="none" stroke="#f4f4f4" stroke-width="0.9"/>
<path d="M1145.5 125.5 L1150.5 130.5" stroke="#555" stroke-width="2.6" stroke-linecap="round"/>
<path d="M1145.5 125.5 L1150.5 130.5" stroke="#aaa" stroke-width="1" stroke-linecap="round"/>
<rect x="1168.5" y="117.5" width="15" height="15" fill="#f2f6fc" stroke="#000" stroke-width="1.4"/>
<rect x="1170" y="119.3" width="12" height="1.8" fill="#000"/><rect x="1172.5" y="122.6" width="9.5" height="0.9" fill="#111"/><rect x="1172.5" y="124.6" width="9.5" height="0.9" fill="#111"/><rect x="1170" y="127" width="12" height="1.8" fill="#222"/><rect x="1172.5" y="130.3" width="9.5" height="0.8" fill="#555"/>
<rect x="1198.5" y="117.5" width="15" height="12.5" fill="#fcfcfc" stroke="#000" stroke-width="1.2"/>
<rect x="1199.2" y="118.2" width="13.6" height="1.6" fill="#6a8ab8"/>
<path d="M1202 122.5 H1211 M1202 124.5 H1211 M1202 126.5 H1211" stroke="#888" stroke-width="0.8"/>
<path d="M1200.5 122.5 H1201.5 M1200.5 124.5 H1201.5 M1200.5 126.5 H1201.5" stroke="#e0a020" stroke-width="0.9"/>
<path d="M1363 104.5 H1368" stroke="#555" stroke-width="2"/>
<path d="M1379.5 97.5 L1385.5 103.5 M1385.5 97.5 L1379.5 103.5" stroke="#555" stroke-width="1.8"/>
</svg>
<!-- category -->
<div class="a" style="left:1128px;top:141px;width:248px;height:25px;background:linear-gradient(#f0f0f0,#e6e6e6 50%,#d6d6d6)"></div>
<div class="a" style="left:1130px;top:149px;width:9px;height:9px;background:#fff;border:1px solid #9a9a9a"></div>
<div class="a" style="left:1132px;top:153px;width:5px;height:1px;background:#222"></div>
<div class="t" style="left:1142px;top:146px;font-size:12.5px;font-weight:bold;color:#222">Form Widgets</div>
<!-- items -->
<div class="t" style="left:1156px;top:170px;font-size:13px;color:#222;letter-spacing:-0.1px">Button</div>
<div class="t" style="left:1156px;top:194px;font-size:13px;color:#222;letter-spacing:-0.1px">CheckBox</div>
<div class="t" style="left:1156px;top:218px;font-size:13px;color:#222;letter-spacing:-0.1px">CheckedTextView</div>
<div class="t" style="left:1156px;top:242px;font-size:13px;color:#222;letter-spacing:-0.12px">Progress Bar (Horizontal)</div>
<div class="t" style="left:1156px;top:266px;font-size:13px;color:#222;letter-spacing:-0.12px">Progress Bar (Large)</div>
<div class="t" style="left:1156px;top:290px;font-size:13px;color:#222;letter-spacing:-0.12px">Progress Bar (Normal)</div>
<div class="t" style="left:1156px;top:314px;font-size:13px;color:#222;letter-spacing:-0.12px">Progress Bar (Small)</div>
<div class="t" style="left:1156px;top:338px;font-size:13px;color:#222;letter-spacing:-0.1px">QuickContactBadge</div>
<div class="t" style="left:1156px;top:362px;font-size:13px;color:#222;letter-spacing:-0.1px">RadioButton</div>
<div class="t" style="left:1156px;top:386px;font-size:13px;color:#222;letter-spacing:-0.1px">RadioGroup</div>
<div class="t" style="left:1156px;top:410px;font-size:13px;color:#222;letter-spacing:-0.1px">RatingBar</div>
<div class="t" style="left:1156px;top:434px;font-size:13px;color:#222;letter-spacing:-0.1px">SeekBar</div>
<div class="t" style="left:1156px;top:458px;font-size:13px;color:#222;letter-spacing:-0.1px">Spinner</div>
<div class="a" style="left:1128px;top:480px;width:248px;height:13px;overflow:hidden"><div class="t" style="left:28px;top:2px;font-size:13px;color:#222;letter-spacing:-0.1px">Text (Large)</div>
<svg style="left:4px;top:4px" width="16" height="12"><path d="M1.2 4.5 V1 H14.8 V4.5 Q13.5 2.8 10 2.8 H9.3 V12 M6.7 12 V2.8 H6 Q2.5 2.8 1.2 4.5" fill="#f4f4f4" stroke="#aaa" stroke-width="0.9"/></svg></div>
<svg style="left:0;top:0" width="1449" height="1014">
<g>
<rect x="1132.5" y="174.5" width="15" height="9" rx="2.5" fill="url(#btng)" stroke="#a8a8a8"/>
<rect x="1135.5" y="198.5" width="9.5" height="9" rx="1" fill="url(#btng)" stroke="#a8a8a8"/>
<path d="M1137 202.5 L1139.5 205 L1143 200.5" fill="none" stroke="#888" stroke-width="1"/>
<rect x="1132.5" y="219.5" width="14" height="14" rx="1" fill="url(#btng)" stroke="#a8a8a8"/>
<g id="prog"><rect x="1132.5" y="247.5" width="15" height="7" fill="#fafafa" stroke="#aaa"/><rect x="1134" y="249" width="1.6" height="4" fill="#555"/><rect x="1136.8" y="249" width="1.6" height="4" fill="#555"/><rect x="1139.6" y="249" width="1.6" height="4" fill="#555"/></g>
<use href="#prog" y="24"/><use href="#prog" y="48"/><use href="#prog" y="72"/>
<rect x="1132.5" y="339.5" width="14" height="14" rx="1" fill="url(#btng)" stroke="#a8a8a8"/>
<circle cx="1139.5" cy="370.5" r="4.2" fill="url(#btng)" stroke="#aaa"/><circle cx="1139.5" cy="370.5" r="1.8" fill="#666"/>
<circle cx="1142" cy="391.5" r="3.6" fill="url(#btng)" stroke="#aaa"/>
<circle cx="1137.5" cy="396" r="3.6" fill="url(#btng)" stroke="#aaa"/><circle cx="1137.5" cy="396" r="1.4" fill="#666"/>
<rect x="1132.5" y="411.5" width="14" height="14" rx="1" fill="url(#btng)" stroke="#a8a8a8"/>
<path d="M1132.5 440.5 H1147 V443.5 H1132.5 Z" fill="#f0f0f0" stroke="#aaa" stroke-width="0.8"/><path d="M1137.5 446.5 V439.5 L1139.5 437.5 L1141.5 439.5 V446.5 Z" fill="#f8f8f8" stroke="#999" stroke-width="0.9"/>
<rect x="1132.5" y="461.5" width="15" height="9" fill="url(#btng)" stroke="#a8a8a8"/><rect x="1143" y="462" width="0.8" height="8" fill="#aaa"/><path d="M1144.5 464.5 H1146.5 M1144.5 467.5 H1146.5" stroke="#777" stroke-width="1"/>
</g>
</svg>
<!-- toolbox scrollbar -->
<div class="a" style="left:1376px;top:141px;width:15px;height:352px;background:#cfcfcf;border:1px solid #a8a8a8;border-radius:4px"></div>
<div class="a" style="left:1376px;top:141px;width:15px;height:15px;background:linear-gradient(#fbfbfb,#e6e6e6);border:1px solid #7e7e7e;border-radius:3px 3px 0 0;box-shadow:inset 1px 1px 0 #fff"></div>
<div class="a" style="left:1376px;top:156px;width:15px;height:58px;border-top:none!important;background:linear-gradient(90deg,#aab9d9,#9cadcf 35%,#8799c0);border:1px solid #5f6f90"></div>
<div class="a" style="left:1376px;top:478px;width:15px;height:15px;background:linear-gradient(#fbfbfb,#e6e6e6);border:1px solid #7e7e7e;border-radius:0 0 3px 3px;box-shadow:inset 1px 1px 0 #fff"></div>
<svg style="left:0;top:0" width="1449" height="1014">
<path d="M1380.5 150 L1383.5 147 L1386.5 150" fill="none" stroke="#999" stroke-width="1"/>
<path d="M1380 483.5 L1383.5 487 L1387 483.5" fill="none" stroke="#333" stroke-width="1.2"/>
<g fill="#4a5670"><rect x="1381.2" y="180" width="4.6" height="1.1" rx=".5"/><rect x="1381.2" y="183" width="4.6" height="1.1" rx=".5"/><rect x="1381.2" y="186" width="4.6" height="1.1" rx=".5"/></g>
</svg>

<!-- PROPERTIES PANEL -->
<div class="a" style="left:1127px;top:500px;width:265px;height:386px;background:#fff;border:1px solid #a8a8a8;border-right:none"></div>
<div class="a" style="left:1127px;top:500px;width:265px;height:48px;background:linear-gradient(#e6e6e6,#e2e2e2 40%,#d4d4d4);border:1px solid #a8a8a8;border-right:none"></div>
<div class="t" style="left:1131px;top:502px;font-size:11px;color:#333;letter-spacing:-0.15px">Properties</div>
<svg style="left:0;top:0" width="1449" height="1014">
<path d="M1363 513.5 H1368" stroke="#555" stroke-width="2"/>
<path d="M1379.5 506.5 L1385.5 512.5 M1385.5 506.5 L1379.5 512.5" stroke="#555" stroke-width="1.8"/>
</svg>
<div class="a" style="left:1131px;top:521px;width:50px;height:23px;border:1px solid #b0aca6;border-radius:4px;background:linear-gradient(#e8e8e8,#dadada)"></div>
<div class="t" style="left:1137px;top:525px;font-size:13px;color:#a4a4a4;letter-spacing:-0.2px">Widget</div>
<div class="t" style="left:1191px;top:525px;font-size:13px;color:#a4a4a4;letter-spacing:-0.2px">Style</div>
<div class="t" style="left:1233px;top:525px;font-size:13px;color:#a4a4a4;letter-spacing:-0.2px">Layout</div>
<div class="t" style="left:1287px;top:525px;font-size:13px;color:#a4a4a4;letter-spacing:-0.2px">Scroll</div>
<div class="t" style="left:1334px;top:525px;font-size:13px;color:#a4a4a4;letter-spacing:-0.2px">Behavior</div>

<!-- bottom tabs -->
<div class="a" style="left:1127px;top:886px;width:265px;height:27px;background:#d0d0d0"></div>
<div class="a" style="left:1214px;top:886px;width:134px;height:20px;background:linear-gradient(#e8e8e8,#dcdcdc);border:1px solid #a8a8a8;border-top:none;border-radius:0 0 4px 4px"></div>
<div class="a" style="left:1127px;top:886px;width:87px;height:23px;background:linear-gradient(#fdfdfd,#f6f6f6 70%);border:1px solid #a8a8a8;border-top:none;border-bottom:none;border-radius:0 0 5px 5px;overflow:hidden"><div class="a" style="left:-1px;bottom:0;width:87px;height:5px;background:linear-gradient(#92a5c8,#7488ae);border-top:1px solid #6a7ca0;border-bottom:1px solid #4e5e80;border-radius:0 0 5px 5px"></div></div>
<div class="t" style="left:1150px;top:889px;font-size:13px;color:#222">Properties</div>
<div class="t" style="left:1237px;top:888px;font-size:13px;color:#222">Document Outline</div>
<svg style="left:0;top:0" width="1449" height="1014">
<rect x="1132.5" y="889.5" width="15" height="13" fill="#f4f4f4" stroke="#888"/>
<rect x="1133" y="890" width="14" height="2" fill="#5b8ad0"/>
<path d="M1135 902 L1140 897 Q1139 894 1142 893.5 L1141 895.5 L1142.5 897 L1144.5 896 Q1144 899 1141 898 L1136.5 903" fill="none" stroke="#777" stroke-width="1"/>
<rect x="1219.5" y="888.5" width="14" height="14" rx="1" fill="#f0f0f0" stroke="#999"/>
<circle cx="1222.5" cy="892" r="1.3" fill="none" stroke="#555" stroke-width="0.8"/>
<circle cx="1222.5" cy="896" r="1.3" fill="#4a8ae0"/>
<rect x="1221" y="899.5" width="3" height="2" fill="#f08020"/>
<path d="M1226 892 H1232 M1226 896 H1232" stroke="#aaa" stroke-width="0.8"/>
</svg>

<!-- STATUS BAR -->
<div class="a" style="left:57px;top:913px;width:1335px;height:22px;background:#ebebeb;border-radius:0 0 4px 4px"></div>
<div class="a" style="left:1215px;top:913px;width:177px;height:22px;background:#d2d2d2;border-radius:0 0 4px 0"></div>
<div class="a" style="left:1132px;top:913px;width:1px;height:22px;background:#b8b8b8"></div>
<div class="a" style="left:1215px;top:913px;width:1px;height:22px;background:#b0b0b0"></div>
<div class="t" style="left:63px;top:917px;font-size:13px;color:#222">Solution loaded.</div>
<div class="t" style="left:1024px;top:917px;font-size:13px;color:#222">12 : 1</div>
<div class="t" style="left:1069px;top:917px;font-size:13px;color:#222;word-spacing:1px">– 64</div>
<div class="t" style="left:1102px;top:917px;font-size:13px;color:#222;letter-spacing:-0.8px">INS</div>
<div class="t" style="left:1155px;top:917px;font-size:13px;color:#222;letter-spacing:-0.5px">Feedback</div>
<div class="t" style="left:1245px;top:917px;font-size:13px;color:#222">0</div>
<div class="t" style="left:1275px;top:917px;font-size:13px;color:#222">0</div>
<div class="t" style="left:1312px;top:917px;font-size:13px;color:#8a8a8a">Task List</div>
<svg style="left:0;top:0" width="1449" height="1014">
<defs><linearGradient id="bubg" x1="0" y1="0" x2="0" y2="1"><stop offset="0" stop-color="#fffce0"/><stop offset="1" stop-color="#e8dc80"/></linearGradient></defs>
<ellipse cx="1144" cy="923" rx="6.8" ry="4.8" fill="url(#bubg)" stroke="#d0a040" stroke-width="1"/>
<path d="M1143 927.5 L1144.5 930.5 L1146 927.5" fill="#e8dc80" stroke="#d0a040" stroke-width="0.8"/>
<circle cx="1233.8" cy="923.8" r="6.9" fill="#858585"/>
<rect x="1229.3" y="922.3" width="9" height="3" rx="1" fill="#fff"/>
<path d="M1264 918 L1270.3 929.6 H1257.7 Z" fill="#d2d2d2" stroke="#777" stroke-width="2" stroke-linejoin="round"/>
<path d="M1264 921.5 V926" stroke="#333" stroke-width="1.3"/><rect x="1263.3" y="927" width="1.4" height="1.4" fill="#333"/>
<rect x="1296.5" y="918.3" width="12.8" height="11.4" rx="1.2" fill="#fff" stroke="#d8a040" stroke-width="1.5"/>
<path d="M1300 921.3 H1307 M1300 923.8 H1307 M1300 926.3 H1307" stroke="#999" stroke-width="0.8"/>
<rect x="1294" y="920.5" width="2.5" height="7" fill="#f4f4f4" stroke="#aaa" stroke-width="0.6"/>
<g fill="#f4f4f4"><rect x="1387" y="923" width="1" height="1"/><rect x="1385" y="925" width="1" height="1"/><rect x="1387" y="925" width="1" height="1"/><rect x="1383" y="927" width="1" height="1"/><rect x="1385" y="927" width="1" height="1"/><rect x="1387" y="927" width="1" height="1"/><rect x="1381" y="929" width="1" height="1"/><rect x="1383" y="929" width="1" height="1"/><rect x="1385" y="929" width="1" height="1"/><rect x="1387" y="929" width="1" height="1"/></g>
</svg>
<!-- UNIT TESTS STRIP -->
<div class="t" style="left:38px;top:141px;font-size:13px;color:#7a7a7a;transform:rotate(90deg);transform-origin:center;width:57px;line-height:15px">Unit Tests</div>
<svg style="left:59px;top:102px" width="16" height="14">
<rect x="0.5" y="0.5" width="15" height="13" rx="1.5" fill="#f2f2f2" stroke="#6a6a6a"/>
<rect x="2.5" y="2.5" width="11" height="9" fill="#0a1a0a" stroke="#111" stroke-width="0.6"/>
<path d="M3 7.5 H6 L7.5 4 L9 10 L10 7.5 H13" fill="none" stroke="#7ce040" stroke-width="1.3"/>
<rect x="3" y="9.5" width="10" height="1.5" fill="#3a8a20" opacity="0.7"/>
</svg>

</body></html>
